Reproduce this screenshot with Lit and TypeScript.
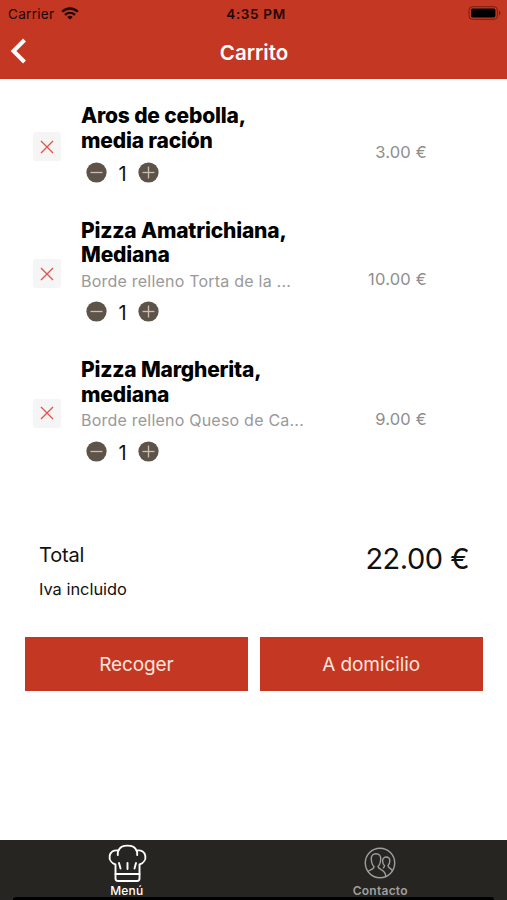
import { LitElement, html, css, svg } from "lit";
import { customElement, property } from "lit/decorators.js";

interface CartItem {
  name: string[];
  note?: string;
  qty: number;
  price: string;
}

const items: CartItem[] = [
  { name: ["Aros de cebolla,", "media ración"], qty: 1, price: "3.00 €" },
  { name: ["Pizza Amatrichiana,", "Mediana"], note: "Borde relleno Torta de la ...", qty: 1, price: "10.00 €" },
  { name: ["Pizza Margherita,", "mediana"], note: "Borde relleno Queso de Ca...", qty: 1, price: "9.00 €" },
];

@customElement("cart-row")
export class CartRow extends LitElement {
  @property({ attribute: false }) item!: CartItem;

  static styles = css`
    :host { display: grid; grid-template-columns: 28px 1fr 100px; align-items: center; padding: 0 80px 0 33px; }
    .remove { width: 28px; height: 29px; margin-top: 3px; border-radius: 3px; background: #f5f5f5; display: flex; align-items: center; justify-content: center; }
    .info { padding-left: 20px; white-space: nowrap; }
    .name { font-weight: 800; font-size: 21px; line-height: 24.5px; letter-spacing: -0.18px; color: #000; }
    .note { font-size: 16px; line-height: 26px; color: #999; letter-spacing: 0.22px; }
    .stepper { display: flex; align-items: center; height: 28px; margin-top: 5px; padding-left: 5px; }
    .noted { margin-top: 4px; }
    .qty { width: 31px; text-align: center; font-size: 20px; line-height: 28px; color: #111; padding-top: 3px; }
    .price { text-align: right; font-size: 16.5px; line-height: 20px; margin-top: 14px; color: #8e8e8e; white-space: nowrap; letter-spacing: 0.2px; }
    svg { display: block; }
  `;

  private disc(plus: boolean) {
    return html`<svg width="21" height="21" viewBox="0 0 21 21">
      <circle cx="10.5" cy="10.5" r="10.1" fill="#5e5349" />
      <path d="M4.5 10.5H16.5" stroke="#c9beb3" stroke-width="1.3" />
      ${plus ? svg`<path d="M10.5 4.5V16.5" stroke="#c9beb3" stroke-width="1.3" />` : ""}
    </svg>`;
  }

  render() {
    const { name, note, qty, price } = this.item;
    return html`
      <div class="remove">
        <svg width="14" height="14" viewBox="0 0 14 14"><path d="M1 1L13 13M13 1L1 13" stroke="#e2524b" stroke-width="1.3" /></svg>
      </div>
      <div class="info">
        ${name.map((l) => html`<div class="name">${l}</div>`)}
        ${note ? html`<div class="note">${note}</div>` : ""}
        <div class="stepper ${note ? "noted" : ""}">${this.disc(false)}<span class="qty">${qty}</span>${this.disc(true)}</div>
      </div>
      <div class="price">${price}</div>
    `;
  }
}

@customElement("app-root")
export class AppRoot extends LitElement {
  static styles = css`
    :host { display: flex; flex-direction: column; height: 900px; background: #fff; color: #111; overflow: hidden; font-family: Inter, "Liberation Sans", sans-serif; }
    svg { display: block; }
    .header { height: 79px; background: #c43722; flex: none; }
    .status { height: 27px; display: grid; grid-template-columns: 1fr auto 1fr; align-items: center; padding: 0 6px 0 8px; font-size: 13.5px; color: #1d0603; }
    .carrier { display: flex; align-items: center; gap: 7px; letter-spacing: 0.3px; }
    .time { font-weight: 600; padding-left: 3px; letter-spacing: 0.65px; }
    .battery { justify-self: end; margin-top: -2px; }
    .nav { height: 50px; display: grid; grid-template-columns: 60px 1fr 60px; align-items: center; }
    .back { padding-left: 9px; margin-top: -3px; }
    .title { text-align: center; color: #fff; font-size: 20.5px; font-weight: 600; padding-left: 1px; }
    .list { padding-top: 25px; flex: none; }
    cart-row { margin-bottom: 32.5px; }
    .total { display: flex; justify-content: space-between; padding: 0 38px 0 39px; margin-top: 43.5px; flex: none; }
    .label { font-size: 20px; line-height: 28px; letter-spacing: -0.2px; }
    .vat { font-size: 16.4px; line-height: 22px; margin-top: 9px; }
    .sum { font-size: 29px; line-height: 36px; letter-spacing: -0.5px; }
    .actions { display: grid; grid-template-columns: 1fr 1fr; gap: 12px; padding: 0 24.5px 0 25px; margin-top: 37px; }
    .btn { height: 54px; background: #c43722; color: #fde5df; font-size: 19px; letter-spacing: -0.1px; display: flex; align-items: center; justify-content: center; box-sizing: border-box; padding-top: 1px; }
    .tabs { margin-top: auto; height: 57px; background: #262521; display: grid; grid-template-columns: 1fr 1fr; flex: none; }
    .tab { display: flex; flex-direction: column; align-items: center; font-size: 12px; line-height: 14px; font-weight: 600; color: #a09f9d; padding-top: 3px; letter-spacing: 0.25px; }
    .tab.active { color: #fff; font-weight: 500; letter-spacing: 0.2px; }
    .tab svg { margin-bottom: 1px; }
    .edge { height: 3px; background: #262521; padding: 0 13px; flex: none; }
    .edge div { height: 3px; background: #000; border-radius: 3px 3px 0 0; }
  `;

  render() {
    return html`
      <div class="header">
        <div class="status">
          <div class="carrier">Carrier
            <svg width="18" height="13" viewBox="0 0 18 13" fill="none" stroke="#1d0603" stroke-width="2.3">
              <path d="M1.2 4.7C5.6 .4 12.4 .4 16.8 4.7" /><path d="M4 7.9C6.9 5.2 11.1 5.2 14 7.9" />
              <path d="M6.3 9.9C7.9 8.5 10.1 8.5 11.7 9.9L9 12.6Z" fill="#1d0603" stroke="none" />
            </svg>
          </div>
          <div class="time">4:35 PM</div>
          <svg class="battery" width="33" height="14" viewBox="0 0 33 14">
            <rect x="1" y=".7" width="28.4" height="12.6" rx="3.4" fill="none" stroke="#74200f" stroke-width="1" />
            <rect x="3" y="2.6" width="24.4" height="8.8" rx="1.6" fill="#000" />
            <path d="M31 4.8V9.2Q32.5 8.6 32.5 7T31 4.8Z" fill="#74200f" />
          </svg>
        </div>
        <div class="nav">
          <div class="back"><svg width="18" height="26" viewBox="0 0 18 26"><path d="M15.5 2L4.5 13L15.5 24" fill="none" stroke="#fff" stroke-width="4" /></svg></div>
          <div class="title">Carrito</div>
        </div>
      </div>
      <div class="list">${items.map((i) => html`<cart-row .item=${i}></cart-row>`)}</div>
      <div class="total">
        <div><div class="label">Total</div><div class="vat">Iva incluido</div></div>
        <div class="sum">22.00 €</div>
      </div>
      <div class="actions"><div class="btn">Recoger</div><div class="btn">A domicilio</div></div>
      <div class="tabs">
        <div class="tab active">
          <svg width="40" height="40" viewBox="0 0 40 40" fill="none" stroke="#fff" stroke-width="1.9" stroke-linecap="round" stroke-linejoin="round">
            <path d="M8.500 21.500V35.500Q8.500 38 11 38H30Q32.500 38 32.500 35.500V21.500C41.500 18.500 40 6 29.500 7.500C27 1 14 1 11.500 7.500C1 6 -0.500 18.500 8.500 21.500" /><path d="M8.500 31H32.500M11.500 7.500Q10.500 9 10.800 12M29.500 7.500Q30.500 9 30.200 12M20.500 20V26M12 20L13.500 25.500M29 20L27.500 25.500" />
          </svg>Menú
        </div>
        <div class="tab">
          <svg width="40" height="40" viewBox="0 0 40 40" fill="none" stroke="#a09f9d" stroke-width="1.4">
            <circle cx="20" cy="20" r="14.7" /><path d="M8 28.500C9.500 26.500 14 27 14 23.500C12 22 11.600 19.500 11.300 16.500C11 12.500 13 10.700 16 10.700S21 12.500 20.700 16.500C20.400 19.500 20 22 18 23.500C18 27 25.500 26 25.800 33.500M22.700 19C21.500 12.500 30.500 12.500 29.800 18C29.700 20 29.300 21.500 28 22.500C28 25.500 31 24.500 32.500 28M22.700 18.500C22.700 20.500 23.500 21.800 24.500 22.500C24.500 24 24 24.500 23 25.200" />
          </svg>Contacto
        </div>
      </div>
      <div class="edge"><div></div></div>
    `;
  }
}
